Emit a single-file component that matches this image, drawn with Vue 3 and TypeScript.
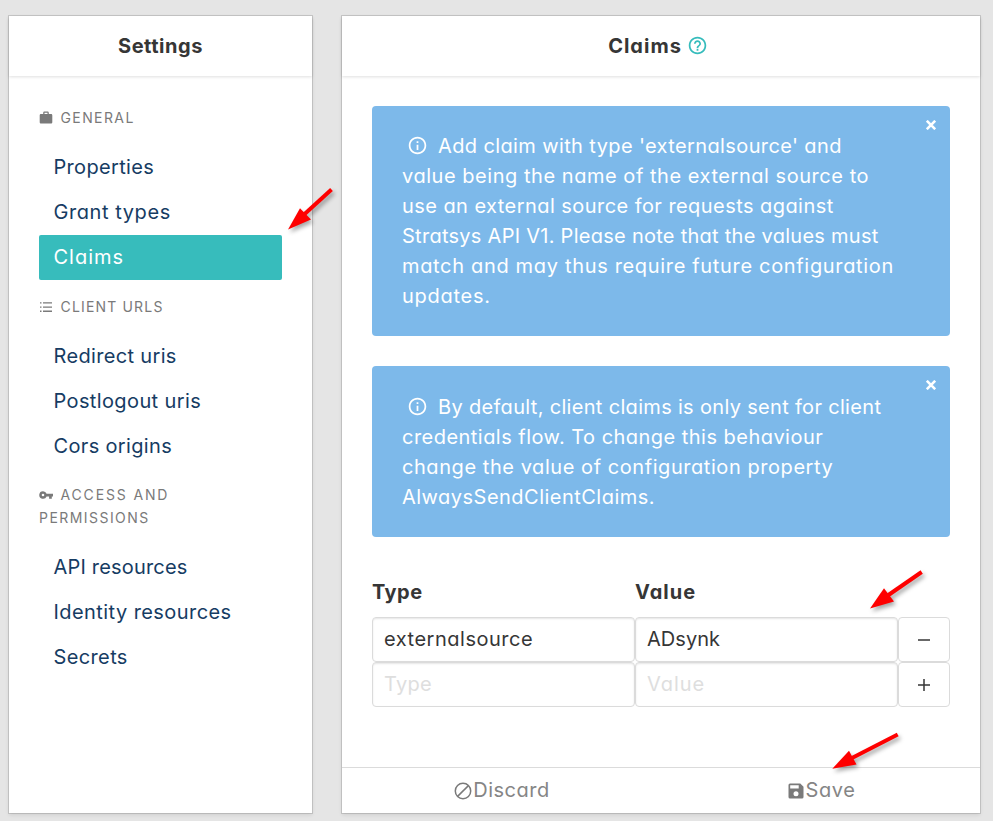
<script setup lang="ts">
import { reactive, ref } from 'vue'

// A line of copy with its tracking in pixels.
interface Line {
  text: string
  track: number
}
interface Section {
  icon: 'case' | 'list' | 'key'
  heading: Line[]
  items: Line[]
}
interface Arrow {
  shaft: string
  head: string
}

const active = ref('Claims')

const sections: Section[] = [
  {
    icon: 'case',
    heading: [{ text: 'GENERAL', track: 1.4 }],
    items: [
      { text: 'Properties', track: 0.32 },
      { text: 'Grant types', track: 0.57 },
      { text: 'Claims', track: 1 },
    ],
  },
  {
    icon: 'list',
    heading: [{ text: 'CLIENT URLS', track: 1.17 }],
    items: [
      { text: 'Redirect uris', track: 0.34 },
      { text: 'Postlogout uris', track: 0.38 },
      { text: 'Cors origins', track: 0.34 },
    ],
  },
  {
    icon: 'key',
    heading: [
      { text: 'ACCESS AND', track: 1.85 },
      { text: 'PERMISSIONS', track: 1.45 },
    ],
    items: [
      { text: 'API resources', track: 0.18 },
      { text: 'Identity resources', track: 0.43 },
      { text: 'Secrets', track: 0.37 },
    ],
  },
]

const alerts: Line[][] = [
  [
    { text: "Add claim with type 'externalsource' and", track: 0.38 },
    { text: 'value being the name of the external source to', track: 0.54 },
    { text: 'use an external source for requests against', track: 0.44 },
    { text: 'Stratsys API V1. Please note that the values must', track: 0.27 },
    { text: 'match and may thus require future configuration', track: 0.67 },
    { text: 'updates.', track: 0.72 },
  ],
  [
    { text: 'By default, client claims is only sent for client', track: 0.32 },
    { text: 'credentials flow. To change this behaviour', track: 0.47 },
    { text: 'change the value of configuration property', track: 0.56 },
    { text: 'AlwaysSendClientClaims.', track: 0.48 },
  ],
]

const claims = reactive([
  { type: 'externalsource', value: 'ADsynk' },
  { type: '', value: '' },
])

const arrows: Arrow[] = [
  { shaft: 'M331.5 189.5L303 215.5', head: '288,229.5 300,208.3 311,219.5' },
  { shaft: 'M921.7 572L887 596', head: '870,608.5 884,588.3 894,601.5' },
  { shaft: 'M897.7 734.5L851 758.5', head: '832.3,768.7 849,750.7 856.5,764.5' },
]
</script>

<template>
  <div class="page">
    <aside class="panel side">
      <header class="title"><span class="t-settings">Settings</span></header>
      <nav class="nav">
        <section v-for="s in sections" :key="s.icon">
          <h3 class="heading">
            <span v-for="(h, i) in s.heading" :key="h.text" class="hline" :style="{ letterSpacing: h.track + 'px' }">
              <svg v-if="i === 0" class="hicon" viewBox="0 0 14 14" aria-hidden="true">
                <path v-if="s.icon === 'case'" fill-rule="evenodd" d="M4.2 3V1.9C4.2 1 4.8.5 5.6.5h2.8c.8 0 1.4.5 1.4 1.4V3h2.1c.8 0 1.4.5 1.4 1.3v7c0 .8-.6 1.3-1.4 1.3H2.1C1.3 12.6.7 12.1.7 11.3v-7C.7 3.5 1.3 3 2.1 3zM5.5 3h3V1.8h-3z" />
                <path v-else-if="s.icon === 'list'" d="M1 2.2h1.5v1.3H1zM4 2.2h9v1.3H4zM1 6.4h1.5v1.3H1zM4 6.4h9v1.3H4zM1 10.6h1.5v1.3H1zM4 10.6h9v1.3H4z" />
                <path v-else fill-rule="evenodd" d="M4 3.2a3.8 3.8 0 0 1 3.6 2.5H14v2.7h-1.2v2.3h-2.7V8.4H7.6A3.8 3.8 0 1 1 4 3.2zM4 5.7a1.3 1.3 0 1 0 0 2.6 1.3 1.3 0 0 0 0-2.6z" />
              </svg>{{ h.text }}
            </span>
          </h3>
          <a
            v-for="item in s.items"
            :key="item.text"
            class="item"
            :class="{ active: item.text === active }"
            :style="{ letterSpacing: item.track + 'px' }"
            @click="active = item.text"
          >{{ item.text }}</a>
        </section>
      </nav>
    </aside>

    <main class="panel main">
      <header class="title">
        <span class="t-claims">Claims</span>
        <svg class="help" viewBox="0 0 24 24" aria-hidden="true">
          <path d="M11 18h2v-2h-2v2zm1-16C6.48 2 2 6.48 2 12s4.48 10 10 10 10-4.48 10-10S17.52 2 12 2zm0 18c-4.41 0-8-3.59-8-8s3.59-8 8-8 8 3.59 8 8-3.59 8-8 8zm0-14c-2.21 0-4 1.79-4 4h2c0-1.1.9-2 2-2s2 .9 2 2c0 2-3 1.75-3 5h2c0-2.25 3-2.5 3-5 0-2.21-1.79-4-4-4z" />
        </svg>
      </header>

      <div class="body">
        <div v-for="(lines, n) in alerts" :key="n" class="alert">
          <svg class="close" viewBox="0 0 10 10" aria-hidden="true"><path d="M.8.8l8.4 8.4M9.2.8L.8 9.2" /></svg>
          <p v-for="(l, i) in lines" :key="i" class="line" :style="{ letterSpacing: l.track + 'px' }">
            <svg v-if="i === 0" class="info" viewBox="0 0 24 24" aria-hidden="true">
              <path d="M11 7h2v2h-2zm0 4h2v6h-2zm1-9C6.48 2 2 6.48 2 12s4.48 10 10 10 10-4.48 10-10S17.52 2 12 2zm0 18c-4.41 0-8-3.59-8-8s3.59-8 8-8 8 3.59 8 8-3.59 8-8 8z" />
            </svg>{{ l.text }}
          </p>
        </div>

        <div class="grid">
          <div class="col c-type">Type</div>
          <div class="col c-value">Value</div>
          <div></div>
          <template v-for="(c, i) in claims" :key="i">
            <input v-model="c.type" class="field f-type" placeholder="Type" />
            <input v-model="c.value" class="field f-value" placeholder="Value" />
            <button class="btn" type="button">
              <svg viewBox="0 0 14 14" aria-hidden="true"><path :d="c.type ? 'M1 7h12' : 'M1 7h12M7 1v12'" /></svg>
            </button>
          </template>
        </div>
      </div>

      <footer class="foot">
        <button class="action discard" type="button">
          <svg viewBox="0 0 18 18" aria-hidden="true"><circle cx="9" cy="9" r="7.7" /><path d="M3.6 14.4L14.4 3.6" /></svg>
          <span>Discard</span>
        </button>
        <button class="action save" type="button">
          <svg viewBox="0 0 16 16" aria-hidden="true">
            <path fill-rule="evenodd" d="M2 .5h10.3L15.5 3.7V14a1.5 1.5 0 0 1-1.5 1.5H2A1.5 1.5 0 0 1 .5 14V2A1.5 1.5 0 0 1 2 .5zM2.2 2.2v3.3h8.5V2.2zM8 8.3a2.5 2.5 0 1 0 0 5 2.5 2.5 0 0 0 0-5z" />
          </svg>
          <span>Save</span>
        </button>
      </footer>
    </main>

    <svg class="arrows" viewBox="0 0 993 821" aria-hidden="true">
      <g v-for="a in arrows" :key="a.head">
        <path :d="a.shaft" />
        <polygon :points="a.head" />
      </g>
    </svg>
  </div>
</template>

<style>
body {
  margin: 0;
  background: #e5e5e5;
}
</style>

<style scoped>
.page {
  position: relative;
  box-sizing: border-box;
  width: 993px;
  height: 821px;
  padding: 16px 13px 8px 9px;
  display: flex;
  gap: 30px;
  overflow: hidden;
  background: #e5e5e5;
  color: #363636;
  font-family: Inter, "Open Sans", sans-serif;
  font-size: 20px;
  font-feature-settings: "cv11";
}
.panel {
  display: flex;
  flex-direction: column;
  background: #fff;
  box-shadow: 0 0 0 1px rgba(10, 10, 10, 0.13), 0 2px 4px rgba(10, 10, 10, 0.1);
}
.side {
  width: 303px;
}
.main {
  width: 638px;
}
.title {
  height: 60px;
  flex: none;
  display: flex;
  align-items: center;
  justify-content: center;
  font-weight: 700;
  box-shadow: 0 1px 3px rgba(10, 10, 10, 0.13);
}
.t-settings {
  letter-spacing: 0.54px;
}
.t-claims {
  letter-spacing: 1px;
}
.help {
  width: 21px;
  height: 21px;
  margin: -1px 6px 0 5px;
  fill: #36bcbc;
}
.nav {
  padding: 15px 30px 0;
}
.heading {
  margin: 15px 0 16px;
  font-size: 14px;
  font-weight: 400;
  line-height: 23px;
  color: #7a7a7a;
}
section:nth-child(3) .heading {
  margin-top: 14px;
}
.hline {
  display: flex;
  align-items: center;
}
.hicon {
  width: 14px;
  height: 14px;
  margin-right: 7.5px;
  fill: #7a7a7a;
}
.item {
  display: block;
  height: 45px;
  padding-left: 14.5px;
  line-height: 45px;
  color: #163c63;
  border-radius: 2px;
  cursor: pointer;
}
.item.active {
  background: #37bcbc;
  color: #fff;
}
.body {
  flex: 1;
  padding: 30px 30px 0;
}
.alert {
  position: relative;
  margin-bottom: 30px;
  padding: 25px 30px;
  border-radius: 4px;
  background: #7db9ea;
  color: #fff;
}
.alert + .alert {
  padding-top: 26px;
  margin-bottom: 40px;
}
.close {
  position: absolute;
  top: 14px;
  right: 14px;
  width: 10px;
  height: 10px;
  fill: none;
  stroke: #fff;
  stroke-width: 2.6;
}
.line {
  display: flex;
  align-items: center;
  height: 30px;
  margin: 0;
  line-height: 30px;
  white-space: nowrap;
}
.info {
  width: 21px;
  height: 21px;
  margin: -1px 10px 0 5px;
  fill: #fff;
}
.grid {
  display: grid;
  grid-template-columns: 263px 263px 52px;
  grid-template-rows: 40px 45px 45px;
}
.col {
  line-height: 30px;
  font-weight: 700;
}
.c-type {
  letter-spacing: 0.46px;
}
.c-value {
  letter-spacing: 1px;
}
.field,
.btn {
  box-sizing: border-box;
  min-width: 0;
  margin: 0;
  border: 1px solid #dbdbdb;
  border-radius: 4px;
  background: #fff;
  color: #363636;
  font: inherit;
}
.field {
  padding: 0 11px 2px;
  letter-spacing: 0.52px;
  font-feature-settings: inherit;
  box-shadow: inset 0 1px 2px rgba(10, 10, 10, 0.1);
}
.f-value {
  letter-spacing: 0.03px;
}
.field::placeholder {
  color: #dedede;
  opacity: 1;
}
.f-type::placeholder {
  letter-spacing: 0.3px;
}
.f-value::placeholder {
  letter-spacing: 0.93px;
}
.btn {
  display: flex;
  align-items: center;
  justify-content: center;
  padding: 0;
}
.btn svg {
  width: 14px;
  height: 14px;
  fill: none;
  stroke: #363636;
  stroke-width: 1.5;
}
.foot {
  height: 45px;
  flex: none;
  display: grid;
  grid-template-columns: 1fr 1fr;
  border-top: 1px solid #dbdbdb;
}
.action {
  display: flex;
  align-items: center;
  justify-content: center;
  padding: 0 0 2px;
  border: 0;
  background: none;
  color: #858585;
  font: inherit;
  font-feature-settings: inherit;
}
.discard {
  gap: 1px;
  padding-left: 1px;
  letter-spacing: 0.5px;
}
.discard svg {
  width: 18px;
  height: 18px;
  margin-top: 2px;
  fill: none;
  stroke: #7a7a7a;
  stroke-width: 1.5;
}
.save {
  gap: 2px;
  padding-left: 2px;
  letter-spacing: 0.6px;
}
.save svg {
  width: 16px;
  height: 16px;
  margin-top: 2px;
  fill: #7a7a7a;
}
.arrows {
  position: absolute;
  inset: 0;
  width: 993px;
  height: 821px;
  pointer-events: none;
  fill: #fe0000;
  filter: drop-shadow(2px 3px 2px rgba(0, 0, 0, 0.35));
}
.arrows path {
  stroke: #fe0000;
  stroke-width: 4;
}
</style>
